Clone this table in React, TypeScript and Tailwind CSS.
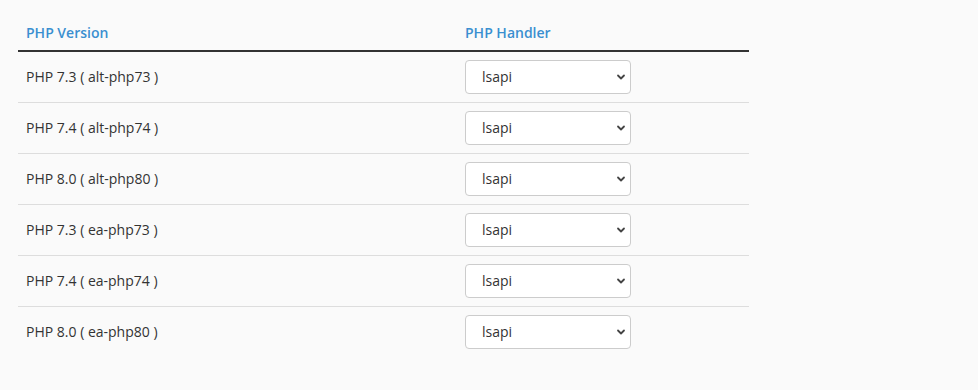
const rows = [
  "PHP 7.3 ( alt-php73 )",
  "PHP 7.4 ( alt-php74 )",
  "PHP 8.0 ( alt-php80 )",
  "PHP 7.3 ( ea-php73 )",
  "PHP 7.4 ( ea-php74 )",
  "PHP 8.0 ( ea-php80 )",
];

export default function App() {
  return (
    <div className="min-h-[390px] w-full bg-[#fafafa] pt-[14px] pl-[18px] font-['Open_Sans',sans-serif] text-[14px] text-[#333]">
      <table className="w-[731px] border-collapse text-left">
        <thead>
          <tr className="border-b-2 border-[#333]">
            <th className="h-[37px] w-[439px] px-2 align-middle font-semibold text-[#3a8fd0]">PHP Version</th>
            <th className="h-[37px] px-2 align-middle font-semibold text-[#3a8fd0]">PHP Handler</th>
          </tr>
        </thead>
        <tbody>
          {rows.map((name, i) => (
            <tr key={name} className={i < rows.length - 1 ? "border-b border-[#ddd]" : ""}>
              <td className="h-[51px] px-2 align-middle">{name}</td>
              <td className="h-[51px] px-2 align-middle">
                <div className="relative w-[166px]">
                  <select className="h-[34px] w-full appearance-none rounded-[4px] border border-[#ccc] bg-white pl-4 pr-8 text-[14px] text-[#333] outline-none">
                    <option>lsapi</option>
                  </select>
                  <svg className="pointer-events-none absolute right-[5px] top-1/2 h-[10px] w-[10px] -translate-y-1/2" viewBox="0 0 10 10" fill="none" stroke="#444" strokeWidth="1.8" strokeLinecap="round" strokeLinejoin="round">
                    <path d="M2 3.5 L5 6.5 L8 3.5" />
                  </svg>
                </div>
              </td>
            </tr>
          ))}
        </tbody>
      </table>
    </div>
  );
}
